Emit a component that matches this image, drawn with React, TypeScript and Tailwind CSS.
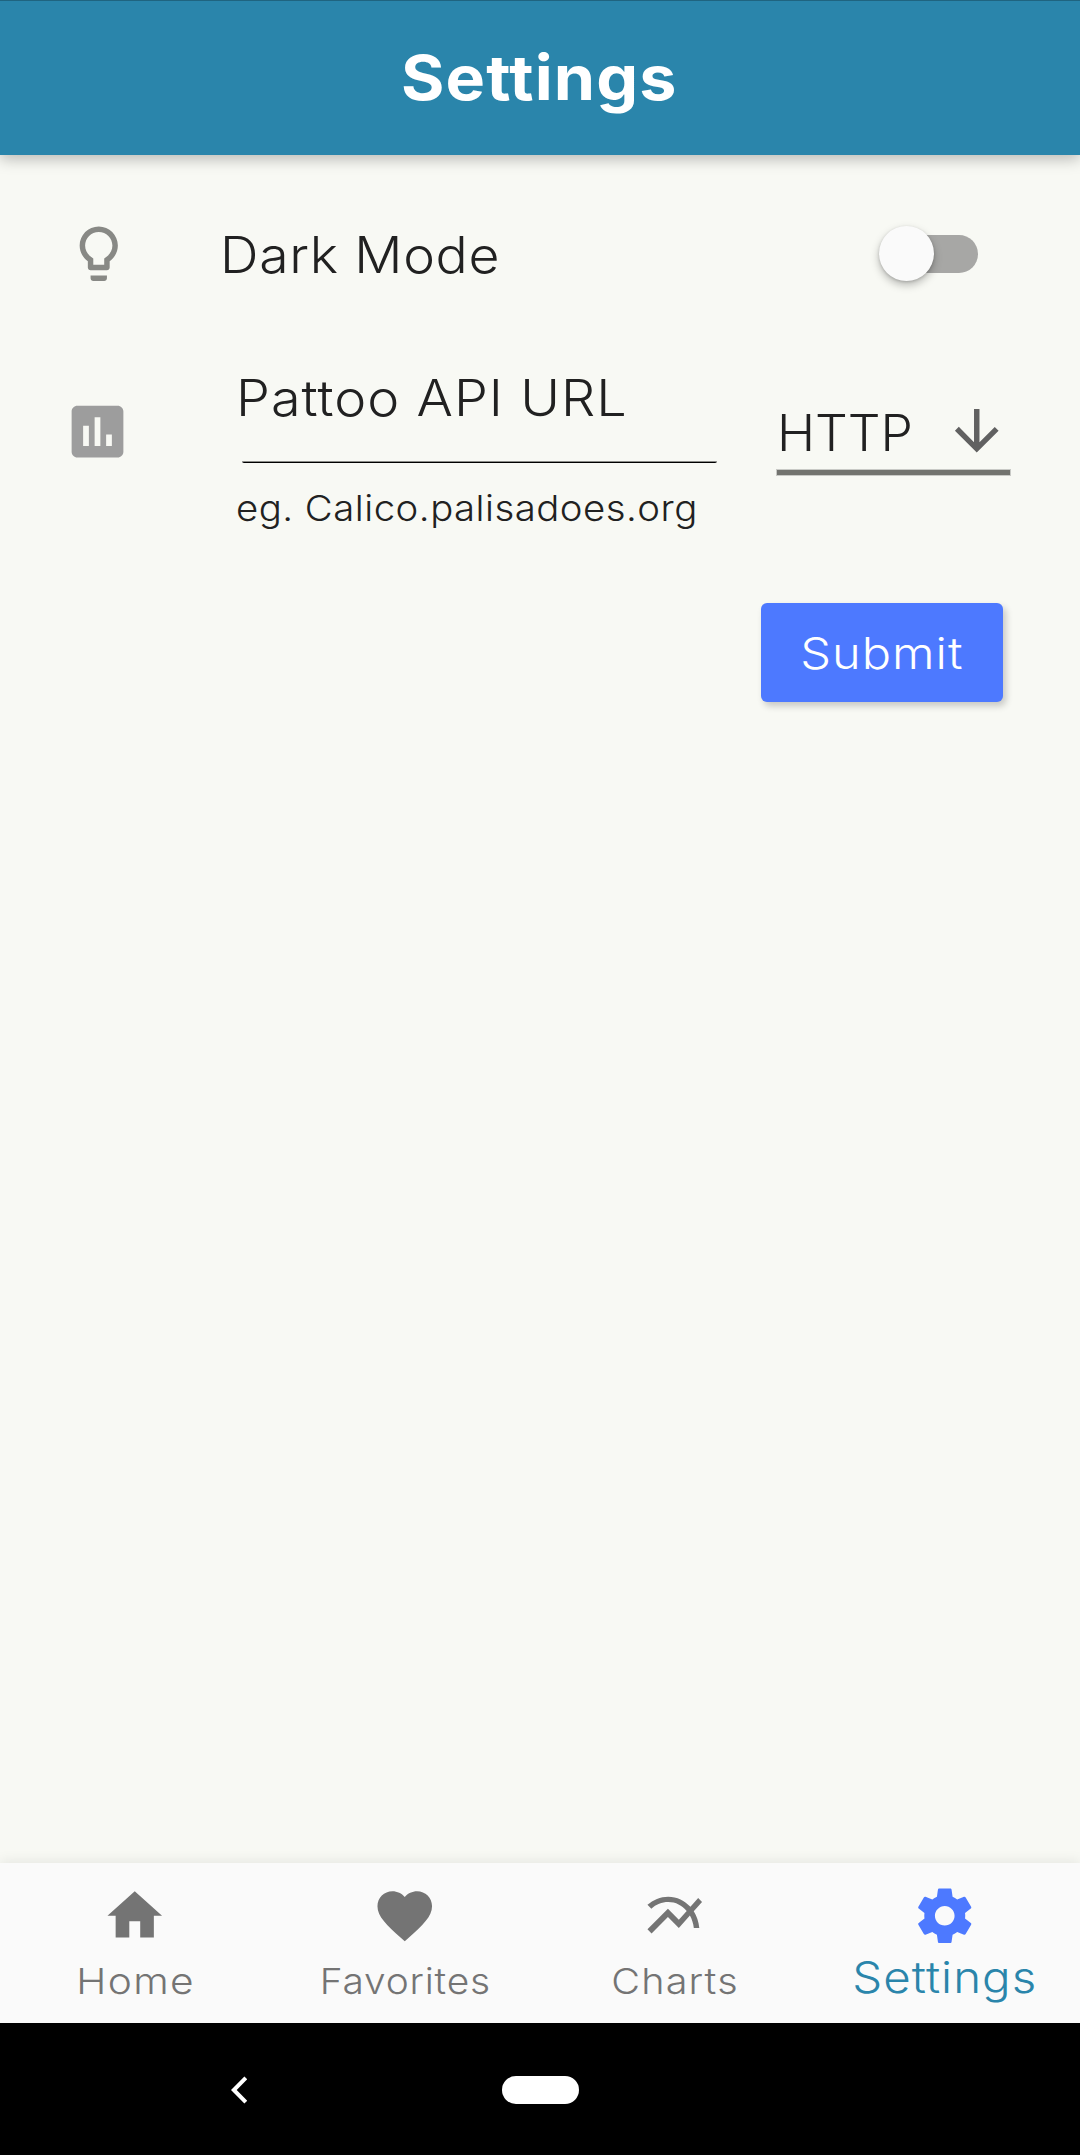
import React from 'react';

type IconProps = { d: string; className: string };

function Icon({ d, className }: IconProps) {
  return (
    <svg viewBox="0 0 24 24" fill="currentColor" className={`block shrink-0 ${className}`}>
      <path d={d} />
    </svg>
  );
}

const icons = {
  bulb: 'M9 21c0 .55.45 1 1 1h4c.55 0 1-.45 1-1v-1H9v1zm3-19C8.14 2 5 5.14 5 9c0 2.38 1.19 4.47 3 5.74V17c0 .55.45 1 1 1h6c.55 0 1-.45 1-1v-2.26c1.81-1.27 3-3.36 3-5.74 0-3.86-3.14-7-7-7zm2.85 11.1l-.85.6V16h-4v-2.3l-.85-.6C7.8 12.16 7 10.63 7 9c0-2.76 2.24-5 5-5s5 2.24 5 5c0 1.63-.8 3.16-2.15 4.1z',
  assessment:
    'M19 3H5c-1.1 0-2 .9-2 2v14c0 1.1.9 2 2 2h14c1.1 0 2-.9 2-2V5c0-1.1-.9-2-2-2zM9 17H7v-7h2v7zm4 0h-2V7h2v10zm4 0h-2v-4h2v4z',
  arrowDown: 'M20 12l-1.41-1.41L13 16.17V4h-2v12.17l-5.58-5.59L4 12l8 8 8-8z',
  home: 'M10 20v-6h4v6h5v-8h3L12 3 2 12h3v8z',
  heart:
    'M12 21.35l-1.45-1.32C5.4 15.36 2 12.28 2 8.5 2 5.42 4.42 3 7.5 3c1.74 0 3.41.81 4.5 2.09C13.09 3.81 14.76 3 16.5 3 19.58 3 22 5.42 22 8.5c0 3.78-3.4 6.86-8.55 11.54L12 21.35z',
  charts:
    'M22 6.92l-1.41-1.41-2.85 3.21C15.68 6.4 12.83 5 9.61 5 6.72 5 4.07 6.16 2 8l1.42 1.42C5.12 7.93 7.27 7 9.61 7c2.74 0 5.09 1.26 6.77 3.24l-2.88 3.24-4-4L2 16.99l1.5 1.5 6-6.01 4 4 4.05-4.55c.75 1.35 1.25 2.9 1.44 4.55H21c-.22-2.3-.95-4.39-2.04-6.14L22 6.92z',
  gear: 'M19.43 12.98c.04-.32.07-.64.07-.98s-.03-.66-.07-.98l2.11-1.65c.19-.15.24-.42.12-.64l-2-3.46c-.12-.22-.39-.3-.61-.22l-2.49 1c-.52-.4-1.08-.73-1.69-.98l-.38-2.65C14.46 2.18 14.25 2 14 2h-4c-.25 0-.46.18-.49.42l-.38 2.65c-.61.25-1.17.59-1.69.98l-2.49-1c-.23-.09-.49 0-.61.22l-2 3.46c-.13.22-.07.49.12.64l2.11 1.65c-.04.32-.07.65-.07.98s.03.66.07.98l-2.11 1.65c-.19.15-.24.42-.12.64l2 3.46c.12.22.39.3.61.22l2.49-1c.52.4 1.08.73 1.69.98l.38 2.65c.03.24.24.42.49.42h4c.25 0 .46-.18.49-.42l.38-2.65c.61-.25 1.17-.59 1.69-.98l2.49 1c.23.09.49 0 .61-.22l2-3.46c.12-.22.07-.49-.12-.64l-2.11-1.65zM12 15.6c-1.98 0-3.6-1.62-3.6-3.6s1.62-3.6 3.6-3.6 3.6 1.62 3.6 3.6-1.62 3.6-3.6 3.6z',
};

const tabs = [
  { label: 'Home', icon: icons.home, text: 'pl-[2px] text-[36px] tracking-[1.2px] scale-x-[1.13]' },
  { label: 'Favorites', icon: icons.heart, text: 'text-[36px] tracking-[0.75px] scale-x-[1.08]' },
  { label: 'Charts', icon: icons.charts, text: 'text-[36px] tracking-[1.05px] scale-x-[1.1]' },
  { label: 'Settings', icon: icons.gear, text: 'text-[43.5px] tracking-[0.93px] scale-x-[1.09]', active: true },
];

export default function App() {
  return (
    <div className="flex h-[2155px] w-[1080px] flex-col overflow-hidden bg-[#f8f9f4] font-['Inter',sans-serif] font-light text-[#212121]">
      <header className="z-10 flex h-[155px] shrink-0 items-center justify-center border-t border-[#1f6480] bg-[#2a85ab] shadow-[0_4px_14px_rgba(0,0,0,0.26)]">
        <h1 className="mr-[2px] scale-x-[1.07] text-[62px] leading-none font-bold tracking-[1.06px] text-white">Settings</h1>
      </header>

      <main className="flex flex-1 flex-col">
        <div className="flex h-[200px] items-center pr-[102px] pl-[66px]">
          <Icon d={icons.bulb} className="mb-[3px] size-[65.5px] text-[#888985]" />
          <span className="ml-[88px] origin-left scale-x-[1.07] text-[50px] leading-none tracking-[0.63px] whitespace-nowrap">
            Dark Mode
          </span>
          <div
            role="switch"
            aria-checked="false"
            className="mb-[3px] ml-auto flex h-[38px] w-[91px] items-center rounded-full bg-[#a7a7a5]"
          >
            <span className="-ml-2 size-[55px] rounded-full bg-[#fafafa] shadow-[0_4px_8px_rgba(0,0,0,0.26),0_1px_3px_rgba(0,0,0,0.16)]" />
          </div>
        </div>

        <div className="flex h-[200px] items-start">
          <Icon d={icons.assessment} className="mt-[42px] ml-[63px] size-[69px] text-[#9d9d9d]" />
          <div className="ml-[106px] flex w-[480px] flex-col">
            <label className="mt-[13px] ml-[-2px] h-[60px] origin-left scale-x-[1.08] text-[50px] leading-[60px] tracking-[0.95px] whitespace-nowrap">
              Pattoo API URL
            </label>
            <div className="mt-[33px] ml-[4px] h-[2px] w-[475px] rounded-b-[2px] border-t border-[#8b8c88] bg-black" />
            <span className="mt-[21px] ml-[-2px] h-[50px] origin-left scale-x-[1.08] text-[35.5px] leading-[50px] tracking-[0.45px] whitespace-nowrap">
              eg. Calico.palisadoes.org
            </span>
          </div>
          <div className="ml-[59px] w-[233px]">
            <div className="mt-[43px] flex h-[70px] items-center justify-between">
              <span className="origin-left scale-x-[1.03] text-[50px] leading-none">HTTP</span>
              <Icon d={icons.arrowDown} className="mr-px mb-[5px] size-[65.5px] text-[#616161]" />
            </div>
            <div className="mt-[2px] h-[5px] bg-[#73746f] shadow-[0_0_0_1px_rgba(115,116,111,0.35)]" />
          </div>
        </div>

        <div className="flex justify-end pt-12 pr-[77px]">
          <button className="flex h-[99px] w-[242px] items-center justify-center rounded-[6px] bg-[#4d79ff] text-white shadow-[3px_4px_7px_rgba(0,0,0,0.2)]">
            <span className="mt-[2px] mr-px scale-x-[1.12] text-[43.5px] leading-none tracking-[0.9px]">Submit</span>
          </button>
        </div>
      </main>

      <nav className="grid h-[160px] shrink-0 grid-cols-4 bg-[#fafafa] shadow-[0_-2px_12px_rgba(0,0,0,0.08)]">
        {tabs.map((tab) => (
          <div
            key={tab.label}
            className={`flex flex-col items-center pt-5 ${tab.active ? 'text-[#4d79ff]' : 'text-[#747474]'}`}
          >
            <Icon d={tab.icon} className="size-[65.5px]" />
            <span
              className={`h-[56px] leading-[56px] ${tab.active ? 'text-[#2a85ab]' : 'mt-[4px]'} ${tab.text}`}
            >
              {tab.label}
            </span>
          </div>
        ))}
      </nav>

      <footer className="flex h-[132px] shrink-0 items-center bg-black pl-[231px]">
        <svg viewBox="0 0 16 28" className="mt-px h-7 w-4" fill="none" stroke="white" strokeWidth="4">
          <path d="M14.8 1.8L2.8 14l12 12.2" />
        </svg>
        <div className="mt-px ml-[255px] h-7 w-[77px] rounded-full bg-white" />
      </footer>
    </div>
  );
}
